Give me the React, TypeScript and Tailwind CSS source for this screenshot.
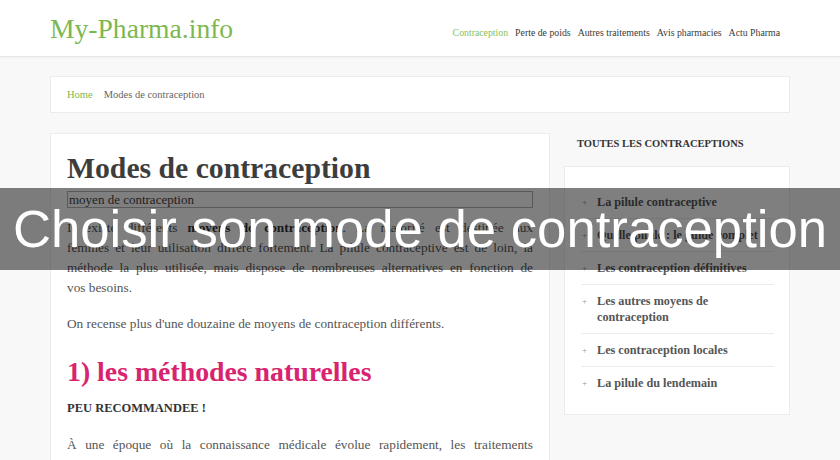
import React from "react";

const navItems = [
  { label: "Contraception", active: true },
  { label: "Perte de poids" },
  { label: "Autres traitements" },
  { label: "Avis pharmacies" },
  { label: "Actu Pharma" },
];

const sideItems = [
  "La pilule contraceptive",
  "Quelle pilule : le guide complet",
  "Les contraception définitives",
  "Les autres moyens de contraception",
  "Les contraception locales",
  "La pilule du lendemain",
];

const serif = { fontFamily: '"Liberation Serif", "Times New Roman", serif' };

export default function App() {
  return (
    <div
      className="relative h-[460px] w-full overflow-hidden bg-[#f8f8f8]"
      style={serif}
    >
      {/* Header */}
      <header className="h-[57px] bg-white border-b border-[#e6e6e6] shadow-[0_1px_2px_rgba(0,0,0,0.03)]">
        <div className="mx-auto flex h-full w-[740px] items-center justify-between pr-[10px]">
          <div className="text-[27.6px] leading-none text-[#7db84f] mt-[1px]">
            My-Pharma.info
          </div>
          <nav className="flex gap-[7px] text-[9.8px] mt-[10px]">
            {navItems.map((n) => (
              <span
                key={n.label}
                className={n.active ? "text-[#86c15a]" : "text-[#3a3a3a]"}
              >
                {n.label}
              </span>
            ))}
          </nav>
        </div>
      </header>

      <div className="mx-auto w-[740px]">
        {/* Breadcrumb */}
        <div className="mt-[19px] flex h-[37px] items-center gap-[11px] border border-[#ececec] bg-white px-[16px] text-[10.5px]">
          <span className="text-[#7db84f]">Home</span>
          <span className="text-[#666]">Modes de contraception</span>
        </div>

        <div className="mt-[20px] flex gap-[14px]">
          {/* Main card */}
          <main className="w-[500px] shrink-0 border border-[#ececec] bg-white px-[16px] pt-[16px] pb-[40px] text-[13.3px] leading-[20px] text-[#555]">
            <h1 className="text-[29.7px] font-bold leading-[36px] text-[#3d3d3d]">
              Modes de contraception
            </h1>
            <div className="mt-[5px] h-[17px] border border-[#b5b5b5] px-[1px] text-[13px] leading-[15px] text-[#444]">
              moyen de contraception
            </div>
            <div className="mt-[10px] text-justify">
              <p className="[text-align-last:justify]">
                Il existe différents <b className="text-[#333]">moyens de contraception</b>. La majorité est destinée aux
              </p>
              <p className="[text-align-last:justify]">
                femmes et leur utilisation diffère fortement. La pilule contraceptive est de loin, la
              </p>
              <p className="[text-align-last:justify]">
                méthode la plus utilisée, mais dispose de nombreuses alternatives en fonction de
              </p>
              <p>vos besoins.</p>
            </div>
            <p className="mt-[16px]">
              On recense plus d'une douzaine de moyens de contraception différents.
            </p>
            <h2 className="mt-[21px] text-[27.8px] font-bold leading-[34px] text-[#d8246f]">
              1) les méthodes naturelles
            </h2>
            <p className="mt-[9px] text-[12.5px] font-bold text-[#333]">
              PEU RECOMMANDEE !
            </p>
            <p className="mt-[17px] [text-align-last:justify]">
              À une époque où la connaissance médicale évolue rapidement, les traitements
            </p>
          </main>

          {/* Sidebar */}
          <aside className="w-[226px] shrink-0">
            <h3 className="mt-[3px] pl-[13px] text-[10.5px] font-bold leading-[16px] text-[#333]">
              TOUTES LES CONTRACEPTIONS
            </h3>
            <div className="mt-[14px] border border-[#ececec] bg-white pl-[16px] pr-[15px] pt-[19px] pb-[15px]">
              <ul className="divide-y divide-[#ececec]">
                {sideItems.map((s) => (
                  <li
                    key={s}
                    className="flex py-[8px] text-[12.2px] font-bold leading-[16px] text-[#555]"
                  >
                    <span className="w-[16px] shrink-0 pl-[1px] text-[9px] font-normal text-[#999]">
                      +
                    </span>
                    <span>{s}</span>
                  </li>
                ))}
              </ul>
            </div>
          </aside>
        </div>
      </div>

      {/* Overlay banner */}
      <div className="absolute left-0 top-[188px] flex h-[82px] w-full items-center justify-center bg-black/50">
        <span
          className="whitespace-nowrap text-[52.7px] leading-none text-white"
          style={{ fontFamily: '"Liberation Sans", Arial, sans-serif' }}
        >
          Choisir son mode de contraception
        </span>
      </div>
    </div>
  );
}
